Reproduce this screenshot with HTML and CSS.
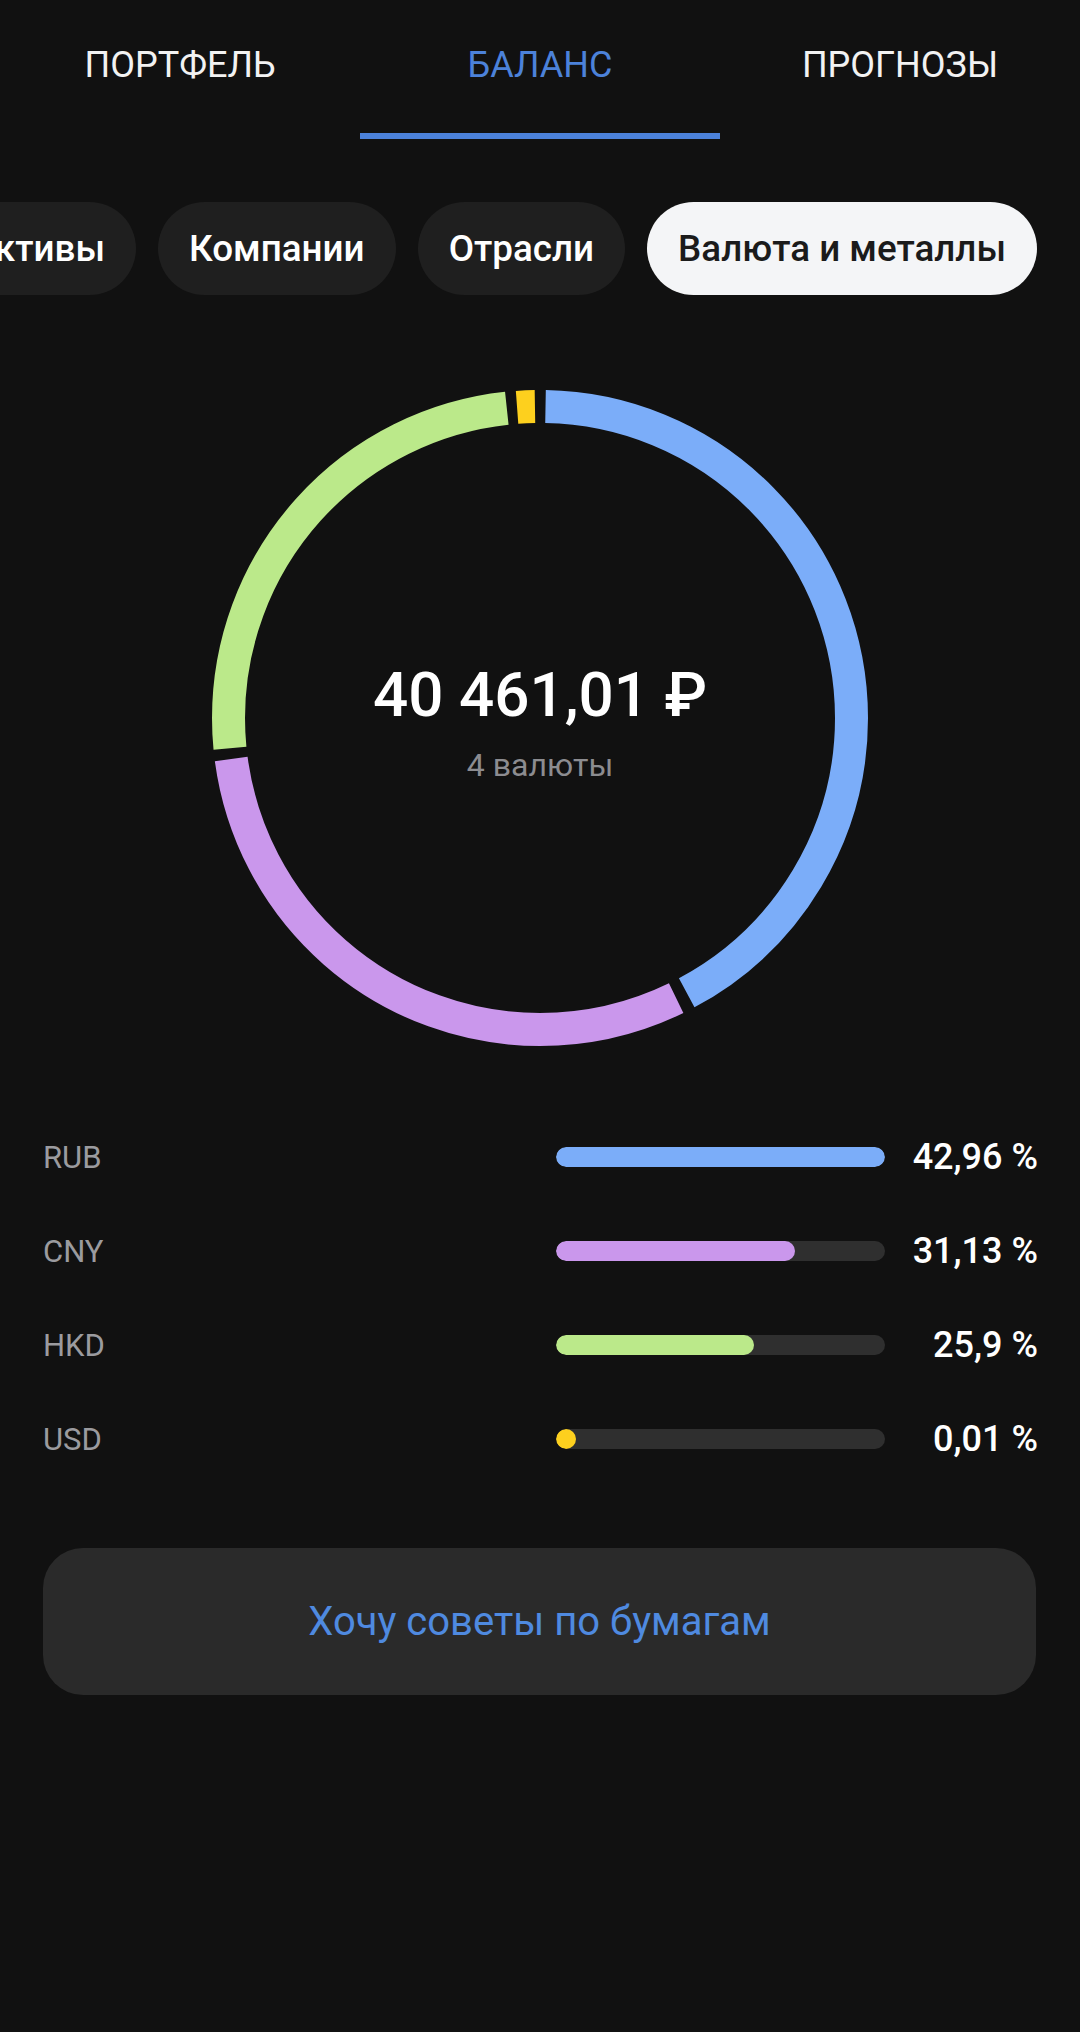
FILE: index.html
```html
<!DOCTYPE html>
<html lang="ru">
<head>
    <meta charset="UTF-8">
    <meta name="viewport" content="width=device-width, initial-scale=1.0">
    <title>Баланс</title>
    <link rel="stylesheet" href="styles.css">
</head>
<body>
    <div class="tabs">
        <div class="tab">ПОРТФЕЛЬ</div>
        <div class="tab active">БАЛАНС</div>
        <div class="tab">ПРОГНОЗЫ</div>
    </div>

    <div class="chips">
        <div class="chip">Активы</div>
        <div class="chip">Компании</div>
        <div class="chip">Отрасли</div>
        <div class="chip selected">Валюта и металлы</div>
    </div>

    <div class="donut">
        <svg class="donut-ring" width="656" height="656" viewBox="0 0 656 656">
            <!-- circumference 2*pi*311.5 = 1957.2, 5.437 per degree -->
            <g transform="rotate(-90 328 328)" fill="none" stroke-width="33">
                <circle cx="328" cy="328" r="311.5" stroke="#7badf9"
                        stroke-dasharray="819.9 1957.2" stroke-dashoffset="-5.6"></circle>
                <circle cx="328" cy="328" r="311.5" stroke="#ca97ec"
                        stroke-dasharray="588.8 1957.2" stroke-dashoffset="-837.3"></circle>
                <circle cx="328" cy="328" r="311.5" stroke="#bbe98a"
                        stroke-dasharray="486.1 1957.2" stroke-dashoffset="-1437.0"></circle>
                <circle cx="328" cy="328" r="311.5" stroke="#fdd01e"
                        stroke-dasharray="17.9 1957.2" stroke-dashoffset="-1933.4"></circle>
            </g>
        </svg>
        <div class="donut-center">
            <div class="donut-amount">40 461,01 ₽</div>
            <div class="donut-caption">4 валюты</div>
        </div>
    </div>

    <div class="shares">
        <div class="share-row">
            <span class="share-code">RUB</span>
            <div class="share-track"><div class="share-fill rub" style="width: 100%"></div></div>
            <span class="share-value">42,96 %</span>
        </div>
        <div class="share-row">
            <span class="share-code">CNY</span>
            <div class="share-track"><div class="share-fill cny" style="width: 72.5%"></div></div>
            <span class="share-value">31,13 %</span>
        </div>
        <div class="share-row">
            <span class="share-code">HKD</span>
            <div class="share-track"><div class="share-fill hkd" style="width: 60.3%"></div></div>
            <span class="share-value">25,9 %</span>
        </div>
        <div class="share-row">
            <span class="share-code">USD</span>
            <div class="share-track"><div class="share-fill usd" style="width: 0.1%"></div></div>
            <span class="share-value">0,01 %</span>
        </div>
    </div>

    <button class="advice-button">Хочу советы по бумагам</button>
</body>
</html>
```

FILE: styles.css
```css
body {
    margin: 0;
    background-color: #111111;
    color: #f2f2f2;
    font-family: Roboto, "Noto Sans", "DejaVu Sans", sans-serif;
}

.tabs {
    display: grid;
    grid-template-columns: repeat(3, 1fr);
    height: 139px;
}

.tab {
    box-sizing: border-box;
    padding-top: 43px;
    font-size: 36px;
    line-height: 44px;
    text-align: center;
    color: #f2f2f2;
}

.tab.active {
    color: #4c82da;
    border-bottom: 6px solid #4c82da;
}

.chips {
    display: flex;
    justify-content: flex-end;
    gap: 22px;
    margin-top: 63px;
    padding-right: 43px;
    overflow: hidden;
}

.chip {
    flex-shrink: 0;
    height: 93px;
    padding: 0 31px;
    border-radius: 47px;
    background-color: #1f1f1f;
    color: #ffffff;
    font-size: 36.8px;
    font-weight: 500;
    line-height: 93px;
}

.chip.selected {
    background-color: #f4f5f7;
    color: #1b1b1b;
}

.donut {
    display: grid;
    width: 656px;
    height: 656px;
    margin: 95px auto 0;
}

.donut-ring,
.donut-center {
    grid-area: 1 / 1;
}

.donut-center {
    align-self: center;
    margin-top: 6px;
    text-align: center;
}

.donut-amount {
    font-size: 62px;
    font-weight: 500;
    line-height: 76px;
    color: #ffffff;
}

.donut-caption {
    margin-top: 12px;
    font-size: 32px;
    line-height: 40px;
    color: #8c8c90;
}

.shares {
    margin-top: 64px;
    padding: 0 42px 0 43px;
}

.share-row {
    display: grid;
    grid-template-columns: 1fr 329px 153px;
    align-items: center;
    height: 94px;
}

.share-code {
    font-size: 31px;
    color: #9b9b9f;
}

.share-track {
    height: 20px;
    border-radius: 10px;
    background-color: #2f2f2f;
    overflow: hidden;
}

.share-fill {
    min-width: 20px;
    height: 100%;
    border-radius: 10px;
}

.share-fill.rub { background-color: #7badf9; }
.share-fill.cny { background-color: #ca97ec; }
.share-fill.hkd { background-color: #bbe98a; }
.share-fill.usd { background-color: #fdd01e; }

.share-value {
    font-size: 36px;
    font-weight: 500;
    text-align: right;
    color: #ffffff;
}

.advice-button {
    display: block;
    box-sizing: border-box;
    width: calc(100% - 87px);
    height: 147px;
    margin: 62px 44px 0 43px;
    border: none;
    border-radius: 40px;
    background-color: #2a2a2a;
    color: #4f8ae0;
    font-family: inherit;
    font-size: 40px;
}
```
